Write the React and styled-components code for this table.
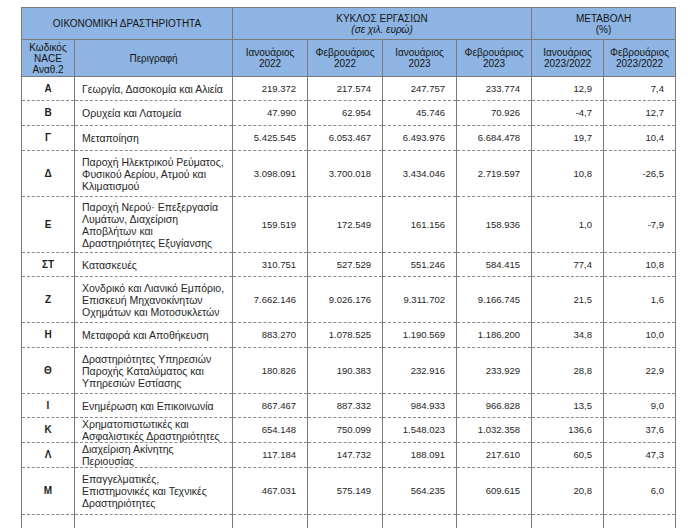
import React from 'react';
import styled, { createGlobalStyle } from 'styled-components';

const GlobalStyle = createGlobalStyle`
  html, body {
    margin: 0;
    padding: 0;
    background: #ffffff;
  }
  body {
    font-family: "Liberation Sans", Arial, sans-serif;
    overflow: hidden;
  }
`;

const rows = [
  { code: 'Α', desc: ['Γεωργία, Δασοκομία και Αλιεία'], vals: ['219.372', '217.574', '247.757', '233.774', '12,9', '7,4'], h: 24 },
  { code: 'Β', desc: ['Ορυχεία και Λατομεία'], vals: ['47.990', '62.954', '45.746', '70.926', '-4,7', '12,7'], h: 25 },
  { code: 'Γ', desc: ['Μεταποίηση'], vals: ['5.425.545', '6.053.467', '6.493.976', '6.684.478', '19,7', '10,4'], h: 25 },
  { code: 'Δ', desc: ['Παροχή Ηλεκτρικού Ρεύματος,', 'Φυσικού Αερίου, Ατμού και', 'Κλιματισμού'], vals: ['3.098.091', '3.700.018', '3.434.046', '2.719.597', '10,8', '-26,5'], h: 46 },
  { code: 'Ε', desc: ['Παροχή Νερού· Επεξεργασία', 'Λυμάτων, Διαχείριση', 'Αποβλήτων και', 'Δραστηριότητες Εξυγίανσης'], vals: ['159.519', '172.549', '161.156', '158.936', '1,0', '-7,9'], h: 56 },
  { code: 'ΣΤ', desc: ['Κατασκευές'], vals: ['310.751', '527.529', '551.246', '584.415', '77,4', '10,8'], h: 24 },
  { code: 'Ζ', desc: ['Χονδρικό και Λιανικό Εμπόριο,', 'Επισκευή Μηχανοκίνητων', 'Οχημάτων και Μοτοσυκλετών'], vals: ['7.662.146', '9.026.176', '9.311.702', '9.166.745', '21,5', '1,6'], h: 46 },
  { code: 'Η', desc: ['Μεταφορά και Αποθήκευση'], vals: ['883.270', '1.078.525', '1.190.569', '1.186.200', '34,8', '10,0'], h: 25 },
  { code: 'Θ', desc: ['Δραστηριότητες Υπηρεσιών', 'Παροχής Καταλύματος και', 'Υπηρεσιών Εστίασης'], vals: ['180.826', '190.383', '232.916', '233.929', '28,8', '22,9'], h: 46 },
  { code: 'Ι', desc: ['Ενημέρωση και Επικοινωνία'], vals: ['867.467', '887.332', '984.933', '966.828', '13,5', '9,0'], h: 24 },
  { code: 'Κ', desc: ['Χρηματοπιστωτικές και', 'Ασφαλιστικές Δραστηριότητες'], vals: ['654.148', '750.099', '1.548.023', '1.032.358', '136,6', '37,6'], h: 25 },
  { code: 'Λ', desc: ['Διαχείριση Ακίνητης', 'Περιουσίας'], vals: ['117.184', '147.732', '188.091', '217.610', '60,5', '47,3'], h: 23 },
  { code: 'Μ', desc: ['Επαγγελματικές,', 'Επιστημονικές και Τεχνικές', 'Δραστηριότητες'], vals: ['467.031', '575.149', '564.235', '609.615', '20,8', '6,0'], h: 47 },
];

const periods = [
  ['Ιανουάριος', '2022'],
  ['Φεβρουάριος', '2022'],
  ['Ιανουάριος', '2023'],
  ['Φεβρουάριος', '2023'],
  ['Ιανουάριος', '2023/2022'],
  ['Φεβρουάριος', '2023/2022'],
];

const colWidths = [53, 158, 75, 75, 74, 75, 72, 72];

const Page = styled.div`
  padding: 7px 0 0 21px;
`;

const Table = styled.table`
  border-collapse: collapse;
  table-layout: fixed;
  width: 654px;
  font-size: 9.5px;
  color: #262626;
  border: 1px solid #7a7a7a;
`;

const HeadCell = styled.th`
  background: #8db4e2;
  color: #141414;
  font-weight: normal;
  font-size: 10px;
  text-align: center;
  vertical-align: middle;
  line-height: 11px;
  padding: 0 2px;
  height: ${p => p.h - 1}px;
  border: 1px solid #7a7a7a;
`;

const Note = styled.span`
  font-style: italic;
`;

const Cell = styled.td`
  height: ${p => p.h - 1}px;
  padding: 0 11px 0 4px;
  text-align: right;
  vertical-align: middle;
  line-height: 12px;
  white-space: nowrap;
  color: #262626;
  border-left: 1px solid #7a7a7a;
  border-right: 1px solid #7a7a7a;
  border-bottom: 1px dashed #8a8a8a;
`;

const CodeCell = styled(Cell)`
  padding: 0 4px;
  text-align: center;
  font-weight: bold;
  font-size: 10px;
  color: #1e1e1e;
`;

const DescCell = styled(Cell)`
  padding: 0 4px 0 7px;
  text-align: left;
  font-size: 10.5px;
`;

const Lines = ({ lines }) =>
  lines.map((l, i) => (
    <React.Fragment key={i}>
      {i > 0 && <br />}
      {l}
    </React.Fragment>
  ));

export default function App() {
  return (
    <Page>
      <GlobalStyle />
      <Table>
        <colgroup>
          {colWidths.map((w, i) => (
            <col key={i} style={{ width: w }} />
          ))}
        </colgroup>
        <thead>
          <tr>
            <HeadCell colSpan={2} h={32}>ΟΙΚΟΝΟΜΙΚΗ ΔΡΑΣΤΗΡΙΟΤΗΤΑ</HeadCell>
            <HeadCell colSpan={4} h={32}>
              ΚΥΚΛΟΣ ΕΡΓΑΣΙΩΝ
              <br />
              <Note>(σε χιλ. ευρώ)</Note>
            </HeadCell>
            <HeadCell colSpan={2} h={32}>
              ΜΕΤΑΒΟΛΗ
              <br />
              (%)
            </HeadCell>
          </tr>
          <tr>
            <HeadCell h={37}>
              <Lines lines={['Κωδικός', 'NACE', 'Αναθ.2']} />
            </HeadCell>
            <HeadCell h={37}>Περιγραφή</HeadCell>
            {periods.map((p, i) => (
              <HeadCell key={i} h={37}>
                <Lines lines={p} />
              </HeadCell>
            ))}
          </tr>
        </thead>
        <tbody>
          {rows.map(r => (
            <tr key={r.code}>
              <CodeCell h={r.h}>{r.code}</CodeCell>
              <DescCell h={r.h}>
                <Lines lines={r.desc} />
              </DescCell>
              {r.vals.map((v, i) => (
                <Cell key={i} h={r.h}>{v}</Cell>
              ))}
            </tr>
          ))}
          <tr>
            <CodeCell h={40} />
            <DescCell h={40} />
            {colWidths.slice(2).map((_, i) => (
              <Cell key={i} h={40} />
            ))}
          </tr>
        </tbody>
      </Table>
    </Page>
  );
}
